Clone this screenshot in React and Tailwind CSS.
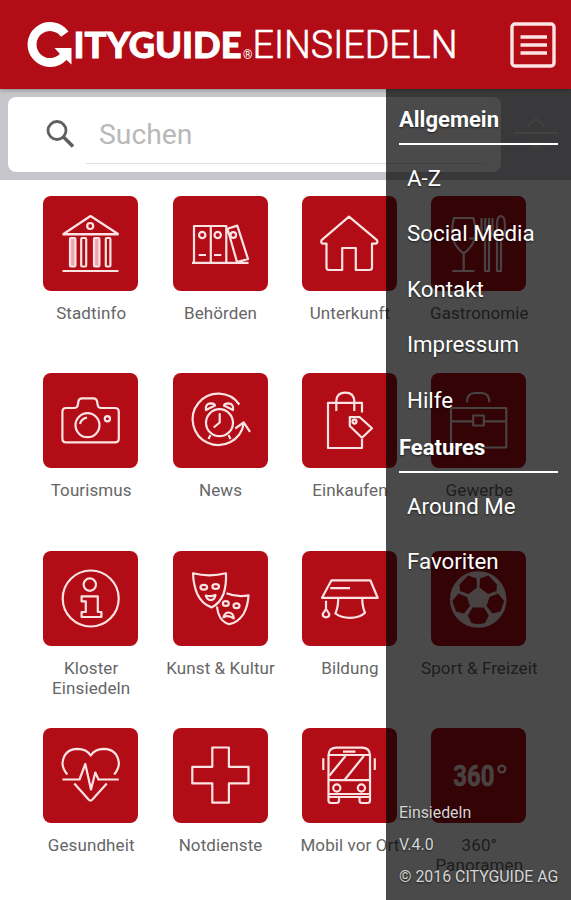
import React, { useState } from 'react';

const icons = {
    townhall: (
        <>
            <path d="M47.5 20 L20.5 38 H75 Z M19.5 38.3 H75.5 M19.5 75 H75.5" />
            <circle cx="47.2" cy="30" r="3" />
            <rect x="27" y="42" width="5.4" height="28.5" rx="1" fill="#e9a5a9" />
            <rect x="38.2" y="42" width="5" height="28.5" rx="1" />
            <rect x="51" y="42" width="5.4" height="28.5" rx="1" fill="#e9a5a9" />
            <rect x="62.8" y="42" width="4.6" height="28.5" rx="1" />
        </>
    ),
    folders: (
        <>
            <path d="M21 66 V30 H53.3 V66 M37.8 30 V66 M54.5 32.8 L64.3 29.6 L75 63 L64 66 Z M19 66.8 H75.5" />
            <circle cx="29.2" cy="39" r="3.2" />
            <circle cx="44.7" cy="39" r="3.2" />
            <circle cx="60.3" cy="39" r="2.8" />
            <path d="M25.7 59 H33 M41 59 H48.3" />
        </>
    ),
    house: (
        <path d="M47 20.6 L19.6 44.2 Q18.4 47.4 21 47.6 H24.5 V71.5 Q24.5 74 27 74 H40.2 V52 H53.8 V74 H67.5 Q70 74 70 71.5 V47.6 H73.5 Q76.2 47 75 44.2 Z" />
    ),
    dining: (
        <>
            <path d="M23 22 H42.5 Q46.5 37 42.5 46 Q39 53 32.7 57.5 Q26.5 53 23 46 Q19 37 23 22 Z M32.7 57.5 V75 M21.3 75 H43.5 M21.5 42.5 H27 M38 42.5 H43.8" />
            <path d="M50.5 22 V35 Q50.5 41 54 42 V75 H58 V42 Q61.5 41 61.5 35 V22 M54.2 22 V35 M58 22 V35" />
            <path d="M66 75 V28 Q66 20 70 20 Q74 20 74 30 Q74 42 70 45 V75 Z" />
        </>
    ),
    camera: (
        <>
            <path d="M23 35 H31 Q34.5 35 34.8 32 L35.5 28 Q36 25.3 39 25.3 H50.5 Q53.3 25.3 54 28 L54.7 32 Q55 35 58.5 35 H72 Q75.8 35 75.8 39 V65.5 Q75.8 69.4 72 69.4 H23 Q19.4 69.4 19.4 65.5 V39 Q19.4 35 23 35 Z" />
            <circle cx="44.5" cy="52.2" r="12" />
            <path d="M37 51 Q38.5 45.5 44 44.7" />
            <circle cx="64.4" cy="45.8" r="2.6" />
        </>
    ),
    clock: (
        <>
            <path d="M66.3 31.5 A25.7 25.7 0 1 0 70.7 50.5 M62.3 55.5 L70.7 49.3 L77 58.8" />
            <circle cx="46.5" cy="49.7" r="13.5" />
            <path d="M46.7 40.3 V49.5 L40.7 54.5 M37.5 62 L35.5 66 M55.5 62 L57.5 66" />
            <path d="M33 37 Q32 30.5 38 30.3 Q41.5 30.4 42 32.5 Z M60 37 Q61 30.5 55 30.3 Q51.5 30.4 51 32.5 Z" />
        </>
    ),
    shopping: (
        <>
            <path d="M60 39.5 V29.8 H26 V75 H60 V66" />
            <path d="M34.3 38 V28 Q34.8 19.7 43.3 19.7 Q51.8 19.7 52.3 28 V38" />
            <path d="M47.8 44.2 H57.8 L70 55.3 L60 64.8 L47.8 53 Z" />
            <circle cx="52.5" cy="48.6" r="2" />
        </>
    ),
    briefcase: (
        <>
            <rect x="20" y="35" width="55.3" height="39.5" />
            <path d="M20 48.3 H42 M52.8 48.3 H75 M36 29.3 Q36 20 44 20 H50.5 Q58.3 20 58.3 29.3" />
            <rect x="42.2" y="42.5" width="10.6" height="10" />
        </>
    ),
    info: (
        <>
            <circle cx="47.7" cy="47.5" r="28" />
            <circle cx="46.8" cy="33.6" r="6.2" />
            <path d="M38.6 45.3 H54.8 V61 H58.4 V66 H38.6 V61 H42.8 V50.3 H38.6 Z" />
        </>
    ),
    masks: (
        <>
            <path d="M20 22.3 Q36.5 26.5 53 22.3 Q53.5 34 50.5 43 Q46.5 53 38.5 56.4 Q29 53 24.3 43 Q20.4 34 20 22.3 Z" />
            <ellipse cx="30.8" cy="36.3" rx="3.3" ry="2.4" />
            <ellipse cx="42.7" cy="35.5" rx="3.3" ry="2.4" />
            <path d="M32.8 44.5 Q37.5 46 42.5 44 Q41.5 49 37.8 49.2 Q34 49 32.8 44.5 Z" />
            <path d="M53.5 42.2 Q64 46.5 75.5 44.3 Q75 55 70.5 63 Q65 71.5 56.3 73.2 Q48 71 45.3 62 Q44.2 58 44 55.5" />
            <ellipse cx="52.8" cy="52.5" rx="3" ry="2.4" />
            <ellipse cx="63.5" cy="54.8" rx="3" ry="2.4" />
            <path d="M50.5 66.2 Q52 61.2 56 61.5 Q60.5 62 60.7 67.5 Q55.5 63.5 50.5 66.2 Z" />
        </>
    ),
    graduation: (
        <>
            <path d="M29.5 29.3 H68.3 L75.7 46.8 H20 Z M28.3 37.2 H48" />
            <path d="M36.2 47.3 Q36.3 56 33.4 62.5 Q39 66.8 48 66.8 Q58 66.8 63 61.8 Q60.3 56 60.2 47.3" />
            <path d="M24 49.7 V58 L20.7 63 Q20.7 66.3 24 66.3 Q27.3 66.3 27.3 63 L24 58" />
        </>
    ),
    soccer: (
        <>
            <circle cx="47.2" cy="48.5" r="28.3" fill="#fbe3e3" stroke="none" />
            <g fill="#b20d17" stroke="none">
                <path d="M28.5 33.5 L37 24.5 L45.5 27.5 L46 36.5 L37.5 43 L29 40 Z" />
                <path d="M66 33.5 L57.5 24.5 L49 27.5 L48.5 36.5 L57 43 L65.5 40 Z" />
                <path d="M27.5 42.5 L36 46 L39 55 L33 62.5 L25 60.5 L21.3 50 Z" />
                <path d="M67 42.5 L58.5 46 L55.5 55 L61.5 62.5 L69.5 60.5 L73.2 50 Z" />
                <path d="M41.5 56.5 H53 L57.8 64.5 L54 72 Q47.2 74 40.5 72 L36.7 64.5 Z" />
            </g>
        </>
    ),
    heart: (
        <>
            <path d="M24.3 46.5 Q19.4 40.5 19.5 35 Q21 21.3 34.5 20.9 Q43.5 21 47.7 27.5 Q52 21 60.8 20.9 Q74.3 21.3 75.9 35 Q76 40.5 71.2 46.5" />
            <path d="M19.4 51.5 H36.5 L42.3 36 L48 61.5 L52.3 44.5 L55.5 51.5 H75.8 M31.3 55.5 L45.8 71.8 Q47.5 73.4 49.2 71.8 L63.8 55.5" />
        </>
    ),
    cross: (
        <path d="M39.3 19.5 H55.9 V38.8 H75.5 V55.4 H55.9 V74.7 H39.3 V55.4 H19.3 V38.8 H39.3 Z" />
    ),
    bus: (
        <>
            <path d="M26.5 69 V27 Q27 19.6 34.5 19.6 H60 Q67.5 19.6 68 27 V69 Z M27 27 H67.5 M41 23.6 H53.5 M26.5 52.2 H68 M26.5 66 H68" />
            <path d="M43.5 28 L27.5 47.5 M61.8 28 L42.5 52 M21.3 30.3 V42 M72.8 30.3 V42" />
            <path d="M26.5 69 V72.5 Q26.5 75 29 75 H34.5 Q37 75 37 72.5 V69 M57.5 69 V72.5 Q57.5 75 60 75 H65.5 Q68 75 68 72.5 V69" />
            <circle cx="34.8" cy="60" r="3.6" />
            <circle cx="59.4" cy="60" r="3.6" />
        </>
    ),
    panorama: (
        <>
            <text
                x="22.3"
                y="57.6"
                textLength="41"
                lengthAdjust="spacingAndGlyphs"
                className="font-['Roboto'] text-[30px] font-bold"
                fill="#fbe3e3"
                strokeWidth="0.6"
            >
                360
            </text>
            <circle cx="70.8" cy="41" r="3.4" strokeWidth="2.4" />
        </>
    ),
};

const categories = [
    { label: 'Stadtinfo', icon: 'townhall' },
    { label: 'Behörden', icon: 'folders' },
    { label: 'Unterkunft', icon: 'house' },
    { label: 'Gastronomie', icon: 'dining' },
    { label: 'Tourismus', icon: 'camera' },
    { label: 'News', icon: 'clock' },
    { label: 'Einkaufen', icon: 'shopping' },
    { label: 'Gewerbe', icon: 'briefcase' },
    { label: 'Kloster Einsiedeln', icon: 'info' },
    { label: 'Kunst & Kultur', icon: 'masks' },
    { label: 'Bildung', icon: 'graduation' },
    { label: 'Sport & Freizeit', icon: 'soccer' },
    { label: 'Gesundheit', icon: 'heart' },
    { label: 'Notdienste', icon: 'cross' },
    { label: 'Mobil vor Ort', icon: 'bus' },
    { label: '360° Panoramen', icon: 'panorama' },
];

const Logo = () => (
    <svg width="440" height="60" viewBox="0 0 440 60" className="ml-5 mt-4" fill="white">
        {/* arrow shaped C */}
        <path d="M44.8 18.2 A18 18 0 1 0 43.5 40.5" fill="none" stroke="white" strokeWidth="9" />
        <path d="M34.5 32 H51.5 V48.5 L46.5 44 L40 38 Z" />
        <text
            x="53.5"
            y="42"
            textLength="168"
            lengthAdjust="spacingAndGlyphs"
            className="font-['Lato'] text-[36.5px] font-black"
            stroke="white"
            strokeWidth="0.9"
        >
            ITYGUIDE
        </text>
        <text x="223" y="43" className="font-['Roboto'] text-[12px]">®</text>
        <text
            x="232.5"
            y="42"
            textLength="205"
            lengthAdjust="spacingAndGlyphs"
            className="font-['Roboto'] text-[38px] font-light"
            stroke="white"
            strokeWidth="0.6"
        >
            EINSIEDELN
        </text>
    </svg>
);

const Header = ({ onMenu }) => (
    <header className="relative flex h-[89px] justify-between bg-[#b20d17] shadow-[0_1px_4px_rgba(0,0,0,0.3)]">
        <Logo />
        <button onClick={onMenu} className="mr-[15px] mt-[22px] h-[46px] w-[46px]" aria-label="Menu">
            <svg width="46" height="46" viewBox="0 0 46 46" fill="none" stroke="#fde4e4" strokeWidth="3.4">
                <rect x="2" y="2" width="42" height="42" rx="3" />
                <path d="M10.5 15 H37 M10.5 23 H37 M10.5 31 H37" />
            </svg>
        </button>
    </header>
);

const SearchBar = () => (
    <div className="flex h-[90.5px] items-start bg-[#c5c5ca] pl-2 pt-2">
        <div className="flex h-[75px] w-[493px] rounded-lg bg-white pl-[37px]">
            <svg width="32" height="32" viewBox="0 0 32 32" className="mt-[21px]" fill="none" stroke="#5f5f5f">
                <circle cx="12" cy="12.5" r="9" strokeWidth="2.8" />
                <path d="M18 18.5 L28 28.5" strokeWidth="3.6" />
            </svg>
            <div className="ml-[9px] h-[67px] w-[400px] border-b border-[#dedede] pl-[13px] pt-[13px] font-['Roboto'] text-[28.3px] leading-[50px] text-[#b9b9b9]">
                Suchen
            </div>
        </div>
        <svg width="46" height="40" viewBox="0 0 46 40" className="ml-3 mt-4" fill="none" stroke="#e2e2e6" strokeWidth="1.8">
            <path d="M1 20 H45 M14 14 L23 6 L32 14 M17 29 L23 34 L29 29" />
        </svg>
    </div>
);

const Tile = ({ label, icon }) => (
    <div className="flex h-[177.5px] flex-col items-center">
        <div className="h-[95px] w-[95px] rounded-lg bg-[#b20d17]">
            <svg
                width="95"
                height="95"
                viewBox="0 0 95 95"
                fill="none"
                stroke="#fbe3e3"
                strokeWidth="2.2"
                strokeLinejoin="round"
            >
                {icons[icon]}
            </svg>
        </div>
        <span className="ml-px mt-[12px] w-[124px] text-center text-[17px] leading-5 tracking-[0.1px] text-[#666]">
            {label}
        </span>
    </div>
);

const MenuSection = ({ title, children }) => (
    <section>
        <h2 className="border-b-2 border-white text-[22px] font-bold leading-[47px]">{title}</h2>
        <ul className="pl-2 pt-[6px] text-[22.3px] leading-[55.5px]">{children}</ul>
    </section>
);

const SideMenu = () => (
    <aside className="absolute bottom-0 right-0 top-[89px] flex w-[185.5px] flex-col justify-between bg-black/71 pl-[13.5px] pr-[13.5px] text-white [text-shadow:0_1px_2px_rgba(0,0,0,0.6)]">
        <nav className="whitespace-nowrap pt-[6.5px]">
            <MenuSection title="Allgemein">
                <li>A-Z</li>
                <li>Social Media</li>
                <li>Kontakt</li>
                <li>Impressum</li>
                <li>Hilfe</li>
            </MenuSection>
            <div className="-mt-[4.5px]">
                <MenuSection title="Features">
                    <li>Around Me</li>
                    <li>Favoriten</li>
                </MenuSection>
            </div>
        </nav>
        <footer className="whitespace-nowrap pb-[7px] text-[15.9px] leading-[32px] text-[#d5d5d5]">
            <p>Einsiedeln</p>
            <p>V.4.0</p>
            <p>© 2016 CITYGUIDE AG</p>
        </footer>
    </aside>
);

const App = () => {
    const [menuOpen, setMenuOpen] = useState(true);

    return (
        <div className="relative h-[900px] w-[571px] overflow-hidden bg-white font-['Roboto',sans-serif]">
            <Header onMenu={() => setMenuOpen(!menuOpen)} />
            <SearchBar />
            <main className="ml-[26px] mt-[16px] grid w-[517.5px] grid-cols-4">
                {categories.map((c) => (
                    <Tile key={c.label} label={c.label} icon={c.icon} />
                ))}
            </main>
            {menuOpen && <SideMenu />}
        </div>
    );
};

export default App;
